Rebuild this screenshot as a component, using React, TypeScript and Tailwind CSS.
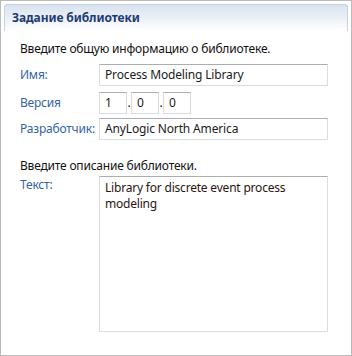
export default function App() {
  const font = { fontFamily: '"Noto Sans", "Open Sans", sans-serif' };
  const box = "h-[22px] border border-[#d9dce2] border-t-[#abadb3] bg-white px-[5px] text-[12px] leading-[20px] text-[#1b1b1b] tracking-[-0.15px]";

  return (
    <div className="w-[352px] h-[356px] bg-white border border-[#bcbcbc] flex flex-col" style={font}>
      {/* шапка */}
      <div className="mx-[3px] mt-[3px] h-[27px] rounded-t-[3px] border border-b-0 border-[#c9d3df] bg-gradient-to-b from-[#d8e2ef] to-white flex items-center pl-[7px]">
        <span className="text-[12px] font-bold text-[#1e3c72] tracking-[-0.1px]">Задание библиотеки</span>
      </div>

      <div className="flex flex-col pl-[19px] pr-[23px] tracking-[-0.2px]">
        <p className="mt-[10px] text-[12px] leading-[16px] text-[#111]">Введите общую информацию о библиотеке.</p>

        <div className="mt-[7px] flex items-center">
          <span className="w-[79px] text-[12px] text-[#3464a3]">Имя:</span>
          <div className={`${box} flex-1`}>Process Modeling Library</div>
        </div>

        <div className="mt-[6px] flex items-center">
          <span className="w-[79px] text-[12px] text-[#3464a3]">Версия</span>
          <div className={`${box} w-[28px]`}>1</div>
          <span className="w-[4px] text-center text-[12px] text-[#111]">.</span>
          <div className={`${box} w-[28px]`}>0</div>
          <span className="w-[4px] text-center text-[12px] text-[#111]">.</span>
          <div className={`${box} w-[28px]`}>0</div>
        </div>

        <div className="mt-[4px] flex items-center">
          <span className="w-[79px] text-[12px] text-[#3464a3]">Разработчик:</span>
          <div className={`${box} flex-1`}>AnyLogic North America</div>
        </div>

        <p className="mt-[18px] text-[12px] leading-[16px] text-[#111]">Введите описание библиотеки.</p>

        <div className="mt-[2px] flex items-start">
          <span className="w-[79px] pt-[1px] text-[12px] leading-[16px] text-[#3464a3]">Текст:</span>
          <div className="flex-1 h-[156px] border border-[#d9dce2] border-t-[#abadb3] bg-white px-[5px] pt-[3px] text-[12px] leading-[16px] text-[#2a1414]">
            Library for discrete event process modeling
          </div>
        </div>
      </div>
    </div>
  );
}
